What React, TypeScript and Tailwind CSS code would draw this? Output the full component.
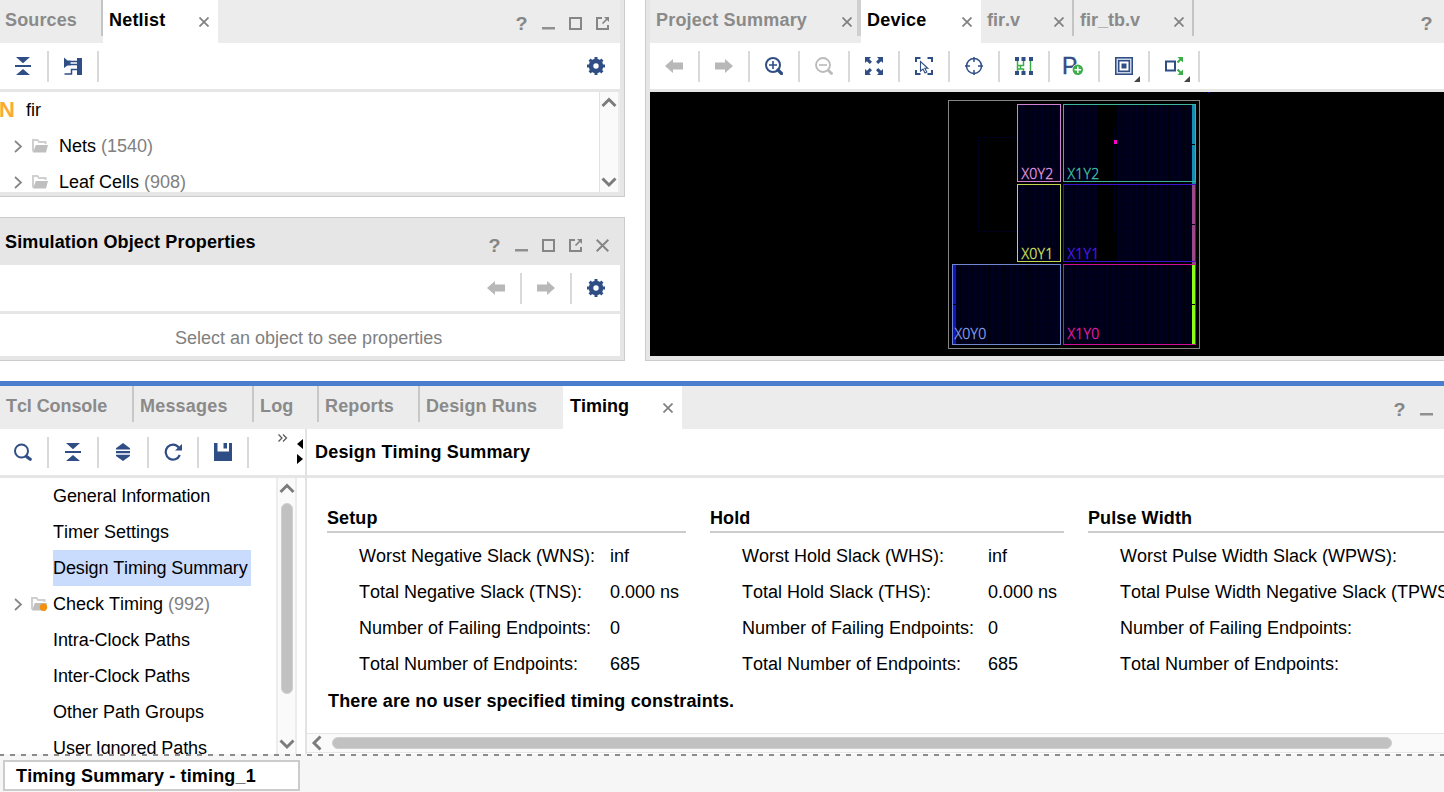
import type { ReactNode } from "react";

const NAVY = "#304e86";
const GREEN = "#3cae49";

function Svg({ w = 18, h = 18, children, className = "" }: { w?: number; h?: number; children: ReactNode; className?: string }) {
  return (
    <svg width={w} height={h} viewBox={`0 0 ${w} ${h}`} className={`block shrink-0 ${className}`} fill="none">
      {children}
    </svg>
  );
}

const CollapseAll = () => (
  <Svg>
    <path d="M2 0h14l-7 6.2zM1 8h16v2H1zM9 12l7 6H2z" fill={NAVY} />
  </Svg>
);

const ExpandAll = () => (
  <Svg>
    <path d="M9 0l7 5.2v1.3H2V5.2zM2 8h14v2.2H2zM2 11.8h14V13l-7 5-7-5z" fill={NAVY} />
  </Svg>
);

const Schematic = () => (
  <Svg>
    <path d="M13 1h5v17h-5z" fill={NAVY} />
    <path d="M0 0.5l3.500 3h3v5h-3L0 11z" fill={NAVY} />
    <path d="M6 4.5h7M6 7.5h7M0.5 17H7.500V12.5h5.500" stroke={NAVY} strokeWidth="1.5" />
  </Svg>
);

const Gear = () => (
  <Svg>
    <circle cx="9" cy="9" r="5" stroke={NAVY} strokeWidth="4.6" />
    <path
      d="M9 0v4M9 14v4M0 9h4M14 9h4M2.6 2.6l2.5 2.5M12.9 12.9l2.5 2.5M2.6 15.4l2.5-2.5M12.9 5.1l2.5-2.5"
      stroke={NAVY}
      strokeWidth="3"
    />
  </Svg>
);

const ArrowLeft = () => (
  <Svg>
    <path d="M0 9l8-7v3.5h10v7H8V16z" fill="#b8b8b8" />
  </Svg>
);

const ArrowRight = () => (
  <Svg>
    <path d="M18 9l-8-7v3.5H0v7h10V16z" fill="#b8b8b8" />
  </Svg>
);

const Search = () => (
  <Svg>
    <circle cx="7.5" cy="8" r="6.5" stroke={NAVY} strokeWidth="2" />
    <path d="M12.500 13.500l3.700 2.800" stroke={NAVY} strokeWidth="3.2" strokeLinecap="round" />
  </Svg>
);

const ZoomIn = () => (
  <Svg>
    <circle cx="8" cy="8" r="7" stroke={NAVY} strokeWidth="2" />
    <path d="M4 8h8M8 4v8" stroke={NAVY} strokeWidth="1.6" />
    <path d="M13 13l3.5 3.5" stroke={NAVY} strokeWidth="3.2" strokeLinecap="round" />
  </Svg>
);

const ZoomOut = () => (
  <Svg>
    <circle cx="8" cy="8" r="7" stroke="#bababa" strokeWidth="1.8" />
    <path d="M4 8h8" stroke="#bababa" strokeWidth="1.6" />
    <path d="M13.5 13.5l3 3" stroke="#bababa" strokeWidth="2.8" strokeLinecap="round" />
  </Svg>
);

const ZoomFit = () => (
  <Svg>
    <path d="M0 0h6L4.2 1.9 7 4.8 4.8 7 1.9 4.2 0 6zM18 0h-6l1.8 1.9L11 4.8 13.2 7l2.9-2.8L18 6zM0 18h6l-1.8-1.9L7 13.2 4.8 11l-2.9 2.8L0 12zM18 18h-6l1.8-1.9-2.8-2.9 2.2-2.2 2.9 2.8L18 12z" fill={NAVY} />
  </Svg>
);

const SelectArea = () => (
  <Svg>
    <path d="M1 5V1h4.5M12.5 1H17v4M17 13v4h-4.5M5.500 17H1v-4" stroke={NAVY} strokeWidth="2" />
    <path d="M5.500 4.500v9.500l2.500-2 2 4 1.800-1-2-3.700h3z" stroke={NAVY} strokeWidth="1.100" />
  </Svg>
);

const Crosshair = () => (
  <Svg>
    <circle cx="9" cy="9" r="7.5" stroke={NAVY} strokeWidth="1.5" />
    <path d="M9 0v5M9 13v5M0 9h5M13 9h5" stroke={NAVY} strokeWidth="1.5" />
  </Svg>
);

const Routing = () => (
  <Svg>
    <path d="M2.500 3v12M8.500 3v5.500h-6M2.500 12h6v3M5.500 8.500V12M15.500 3v12" stroke={GREEN} strokeWidth="1.500" />
    <path d="M0 0h4v4H0zM6.500 0h4v4h-4zM14 0h4v4h-4zM0 14h4v4H0zM6.500 14h4v4h-4zM14 14h4v4h-4z" fill={NAVY} />
  </Svg>
);

const AddPin = () => (
  <div className="relative h-[18px] w-5">
    <span className="absolute -left-[2px] -top-[1px] text-[23px] leading-[20px] text-[#304e86] [-webkit-text-stroke:0.4px_#304e86]">P</span>
    <Svg w={20} className="absolute left-0 top-0">
      <circle cx="13.800" cy="12.800" r="5.900" fill="#fff" />
      <circle cx="13.800" cy="12.800" r="5.200" fill={GREEN} />
      <path d="M10.500 12.800h6.600M13.800 9.500v6.600" stroke="#fff" strokeWidth="1.600" />
    </Svg>
  </div>
);

const Highlight = () => (
  <Svg>
    <rect x="0.75" y="0.75" width="16.500" height="16.500" fill="#c9d3e6" stroke={NAVY} strokeWidth="1.500" />
    <rect x="3.750" y="3.750" width="10.500" height="10.500" fill="#fff" stroke={NAVY} strokeWidth="1.500" />
    <path d="M6.500 6.500h5v5h-5z" fill={NAVY} />
  </Svg>
);

const ShowConnections = () => (
  <Svg>
    <rect x="1" y="4.500" width="9" height="9" stroke={NAVY} strokeWidth="2" />
    <path d="M12.500 5.500L16 2M12.500 12.500L16 16" stroke={GREEN} strokeWidth="2" />
    <path d="M12.500 0H18v5.500zM12.500 18H18v-5.500z" fill={GREEN} />
  </Svg>
);

const Refresh = () => (
  <Svg>
    <path d="M14.800 4.500A7.300 7.500 0 1 0 15.800 12" stroke={NAVY} strokeWidth="2.200" />
    <path d="M18 1v6.500h-7z" fill={NAVY} />
  </Svg>
);

const Save = () => (
  <Svg>
    <path d="M0 0h3.500v8.500h11.500V0h3v18H0z" fill={NAVY} />
    <path d="M9.500 0h3.500v5.500H9.500z" fill={NAVY} />
  </Svg>
);

const Folder = ({ dot = false }: { dot?: boolean }) => (
  <Svg w={17} h={15}>
    <path d="M1 12.500V1h4.500l1.500 2h6.500v2" stroke="#cfcfcf" strokeWidth="2" />
    <path d="M3.800 6H16L14 13.500H1z" fill="#bfbfbf" />
    {dot && <circle cx="12.500" cy="10.300" r="3.700" fill="#f29111" />}
  </Svg>
);

const Chevron = () => (
  <Svg w={9} h={13}>
    <path d="M1 1l6 5.500L1 12" stroke="#858585" strokeWidth="1.700" />
  </Svg>
);

const CloseX = ({ className = "" }: { className?: string }) => (
  <Svg w={10} h={10} className={className}>
    <path d="M0.500 0.500l9 9M9.500 0.500l-9 9" stroke="#808080" strokeWidth="1.700" />
  </Svg>
);

const Help = () => (
  <span className="flex h-[13px] w-[13px] scale-x-110 items-center justify-center text-[18px] font-bold leading-none text-[#868686]">?</span>
);
const Minimize = () => (
  <Svg w={13} h={13}>
    <path d="M0 10h13v2.500H0z" fill="#909090" />
  </Svg>
);
const Maximize = () => (
  <Svg w={13} h={13}>
    <rect x="1" y="1" width="11" height="11" stroke="#868686" strokeWidth="2" />
  </Svg>
);
const Float = () => (
  <Svg w={13} h={13}>
    <path d="M6 1H1v11h11V8" stroke="#868686" strokeWidth="2" />
    <path d="M8 0h5v5z" fill="#868686" />
    <path d="M6.500 6.500L11 2" stroke="#868686" strokeWidth="1.700" />
  </Svg>
);
const CloseWindow = () => (
  <Svg w={13} h={13}>
    <path d="M0.700 0.700l11.600 11.600M12.300 0.700L0.700 12.300" stroke="#868686" strokeWidth="2" />
  </Svg>
);

const Tool = ({ children, menu = false }: { children: ReactNode; menu?: boolean }) => (
  <div className="relative flex h-[46px] w-[50px] shrink-0 items-center">
    <div className="flex w-12 justify-center">{children}</div>
    <div className="h-[31px] w-[2px] bg-[#d9d9d9]" />
    {menu && (
      <svg width="6" height="6" className="absolute left-[34px] top-[33px]">
        <path d="M6 0v6H0z" fill="#444" />
      </svg>
    )}
  </div>
);

const ScrollArrow = ({ dir }: { dir: "up" | "down" | "left" }) => (
  <svg width="16" height="16" viewBox="0 0 16 16" fill="none" className="block shrink-0">
    <path
      d={dir === "up" ? "M1.500 12L8 5.500 14.500 12" : dir === "down" ? "M1.500 4.500L8 11l6.500-6.500" : "M11.500 1.500L5 8l6.500 6.500"}
      stroke="#7b7b7b"
      strokeWidth="2.900"
    />
  </svg>
);

const tabBase = "flex h-[43px] shrink-0 font-bold leading-[40px]";

function DeviceView() {
  const label = { fontFamily: "Open Sans, sans-serif", fontWeight: 300, fontSize: 14, letterSpacing: 0.3, strokeWidth: 0.35 };
  return (
    <svg width="794" height="264" viewBox="0 0 794 264" fill="none" className="block bg-black" shapeRendering="crispEdges">
      <defs>
        <pattern id="fabric" width="6" height="6" patternUnits="userSpaceOnUse">
          <path d="M0 0h6v6H0z" fill="#000019" />
          <path d="M0 0h6v1H0z" fill="#000026" />
          <path d="M0 0h1v6H0z" fill="#000021" />
          <path d="M4 0h1v6H4z" fill="#000014" />
        </pattern>
      </defs>
      <path d="M558 0h2v1h-2z" fill="#0000c0" />
      <rect x="298.500" y="8.500" width="251" height="248" stroke="#858585" />
      <path d="M367 45.500h-38.500v94H367" stroke="#00001c" />
      <path d="M367 12h44v78h-44zM413 12h133v78H413zM367 92h44v78h-44zM413 92h133v78H413zM302 172h109v81H302zM413 172h133v81H413z" fill="url(#fabric)" />
      <path d="M378.500 12v158M400.500 12v158M423.500 12v241M494.500 12v241M518.500 12v241M534.500 12v241M338.500 172v81M354.500 172v81M378.500 172v81M310.500 172v81M313.500 172v81" stroke="#00000a" />
      <path d="M447 13h20v76h-20zM447 93h20v76h-20z" fill="#000" />
      <path d="M464.500 35v54M464.500 93v47" stroke="#00001e" />
      <path d="M542 12h4v80h-4z" fill="#158faf" />
      <path d="M542 92h4v80h-4z" fill="#9b4887" />
      <path d="M542 173h3v79h-3z" fill="#8bff16" />
      <path d="M303 173h3v79h-3z" fill="#1515bd" />
      <rect x="367.500" y="12.500" width="43" height="77" stroke="#d382d3" />
      <rect x="413.500" y="12.500" width="132" height="77" stroke="#3db39a" />
      <rect x="367.500" y="92.500" width="43" height="77" stroke="#c4d64d" />
      <rect x="413.500" y="92.500" width="132" height="77" stroke="#3c12cf" />
      <rect x="302.500" y="172.500" width="108" height="80" stroke="#6f88d0" />
      <rect x="413.500" y="172.500" width="132" height="80" stroke="#cf1095" />
      <path d="M542 52h3v1h-3zM542 132h3v1h-3zM542 212h3v1h-3zM303 212h3v1h-3z" fill="#000" />
      <path d="M464 48h3v4h-3z" fill="#ff00c8" />
      <g style={label}>
        <text x="371.500" y="87" fill="#e29ae2" stroke="#e29ae2">X0Y2</text>
        <text x="417.500" y="87" fill="#45c2a8" stroke="#45c2a8">X1Y2</text>
        <text x="371.500" y="167" fill="#d2e45c" stroke="#d2e45c">X0Y1</text>
        <text x="417.500" y="167" fill="#4f1cee" stroke="#4f1cee">X1Y1</text>
        <text x="304.500" y="247" fill="#88a2ea" stroke="#88a2ea">X0Y0</text>
        <text x="417.500" y="247" fill="#e81eaa" stroke="#e81eaa">X1Y0</text>
      </g>
    </svg>
  );
}

function NetlistPanel() {
  const rows = [
    { name: "Nets", count: "(1540)" },
    { name: "Leaf Cells", count: "(908)" },
  ];
  return (
    <section className="h-[197px] w-[625px] border-b border-r border-[#ccc] bg-[#e6e6e6] pb-1 pr-1">
      <div className="flex h-[43px] bg-[#ececec]">
        <div className={`${tabBase} w-[103px] pl-[5px] tracking-[0.13px] text-[#8a8a8a]`}>
          <span className="w-24">Sources</span>
          <div className="h-9 w-[2px] bg-[#c4c4c4]" />
        </div>
        <div className={`${tabBase} w-[115px] bg-white pl-[6px] tracking-[0.2px]`}>
          <span className="w-[90px]">Netlist</span>
          <CloseX className="mt-[17px]" />
        </div>
        <div className="ml-auto mr-[11px] mt-[17px] flex gap-[14px]">
          <Help />
          <Minimize />
          <Maximize />
          <Float />
        </div>
      </div>
      <div className="flex h-[46px] bg-white">
        <div className="-ml-px flex">
          <Tool><CollapseAll /></Tool>
          <Tool><Schematic /></Tool>
        </div>
        <div className="ml-auto flex w-12 items-center justify-center"><Gear /></div>
      </div>
      <div className="mt-[3px] flex h-[100px] overflow-hidden bg-white">
        <div className="flex-1">
          <div className="flex h-9 items-center">
            <span className="w-[26px] text-[22px] font-bold leading-none text-[#fbab34]"><span className="-ml-px">N</span></span>
            <span>fir</span>
          </div>
          {rows.map((r) => (
            <div key={r.name} className="flex h-9 items-center pl-[14px]">
              <Chevron />
              <div className="ml-[9px] mr-[10px]"><Folder /></div>
              <span>{r.name}</span>
              <span className="ml-[5px] text-[#808080]">{r.count}</span>
            </div>
          ))}
        </div>
        <div className="flex w-[21px] flex-col items-center justify-between border-l border-r-2 border-l-[#e2e2e2] border-r-[#ececec] bg-[#fafafa] pb-[2px] pt-[2px]">
          <ScrollArrow dir="up" />
          <ScrollArrow dir="down" />
        </div>
      </div>
    </section>
  );
}

function PropertiesPanel() {
  return (
    <section className="mt-5 h-[144px] w-[625px] border-y border-r border-[#ccc] bg-[#e6e6e6] pb-1 pr-1">
      <div className="flex h-[47px]">
        <h2 className="pl-[5px] font-bold leading-[48px] tracking-[0.13px]">Simulation Object Properties</h2>
        <div className="ml-auto mr-[11px] mt-[21px] flex gap-[14px]">
          <Help />
          <Minimize />
          <Maximize />
          <Float />
          <CloseWindow />
        </div>
      </div>
      <div className="flex h-[46px] justify-end bg-white">
        <Tool><ArrowLeft /></Tool>
        <Tool><ArrowRight /></Tool>
        <div className="flex w-12 items-center justify-center"><Gear /></div>
      </div>
      <div className="mt-[3px] h-[42px] bg-white pl-[175px] leading-[48px] text-[#808080]">Select an object to see properties</div>
    </section>
  );
}

function DevicePanel() {
  return (
    <section className="ml-5 flex h-[361px] flex-1 flex-col overflow-hidden border-b border-l border-[#ccc] bg-[#e6e6e6] pb-1 pl-1">
      <div className="flex h-[43px] bg-[#ececec] text-[#8a8a8a]">
        <div className={`${tabBase} w-[211px] pl-[6px]`}>
          <span className="w-[186px] tracking-[0.2px]">Project Summary</span>
          <CloseX className="mt-[17px]" />
          <div className="ml-[5px] h-9 w-1 bg-[#d0d0d0]" />
        </div>
        <div className={`${tabBase} w-[120px] bg-white pl-[6px] tracking-[0.25px] text-black`}>
          <span className="w-[95px]">Device</span>
          <CloseX className="mt-[17px]" />
        </div>
        <div className={`${tabBase} w-[93px] pl-[6px]`}>
          <span className="w-[67px]">fir.v</span>
          <CloseX className="mt-[17px]" />
          <div className="ml-2 h-9 w-[2px] bg-[#c4c4c4]" />
        </div>
        <div className={`${tabBase} pl-[6px]`}>
          <span className="w-[94px]">fir_tb.v</span>
          <CloseX className="mt-[17px]" />
          <div className="ml-2 h-9 w-[2px] bg-[#c4c4c4]" />
        </div>
        <div className="ml-auto mr-[11px] mt-[17px]"><Help /></div>
      </div>
      <div className="mb-[3px] flex h-[46px] bg-white">
        <Tool><ArrowLeft /></Tool>
        <Tool><ArrowRight /></Tool>
        <Tool><ZoomIn /></Tool>
        <Tool><ZoomOut /></Tool>
        <Tool><ZoomFit /></Tool>
        <Tool><SelectArea /></Tool>
        <Tool><Crosshair /></Tool>
        <Tool><Routing /></Tool>
        <Tool><AddPin /></Tool>
        <Tool menu><Highlight /></Tool>
        <Tool menu><ShowConnections /></Tool>
      </div>
      <DeviceView />
    </section>
  );
}

const tree = [
  { name: "General Information", cls: "tracking-[-0.1px]" },
  { name: "Timer Settings", cls: "" },
  { name: "Design Timing Summary", cls: "h-9 w-[198px] whitespace-nowrap bg-[#c9dcfe] leading-9 tracking-[-0.12px]" },
  { name: "Check Timing", count: "(992)", cls: "" },
  { name: "Intra-Clock Paths", cls: "tracking-[-0.07px]" },
  { name: "Inter-Clock Paths", cls: "tracking-[-0.07px]" },
  { name: "Other Path Groups", cls: "" },
  { name: "User Ignored Paths", cls: "tracking-[-0.06px]" },
];

function TimingGroup({ title, rows, className, labelWidth }: { title: string; rows: string[][]; className: string; labelWidth: string }) {
  return (
    <div className={`shrink-0 ${className}`}>
      <h3 className="h-[29px] border-b-2 border-[#ccc] font-bold leading-[28px] tracking-[0.1px]">{title}</h3>
      <div className="pl-8 pt-[5px]">
        {rows.map(([k, v]) => (
          <div key={k} className="flex h-9 items-center whitespace-nowrap">
            <span className={`${labelWidth} shrink-0`}>{k}</span>
            <span>{v}</span>
          </div>
        ))}
      </div>
    </div>
  );
}

function TimingPanel() {
  const tabs = [
    { name: "Tcl Console", cls: "w-[134px] pl-[6px] tracking-[-0.08px]", sep: true },
    { name: "Messages", cls: "w-[120px] pl-[6px] tracking-[0.2px]", sep: true },
    { name: "Log", cls: "w-[65px] pl-[6px] tracking-[0.13px]", sep: true },
    { name: "Reports", cls: "w-[101px] pl-[6px] tracking-[0.13px]", sep: true },
    { name: "Design Runs", cls: "w-[143px] pl-[6px] tracking-[0.1px]", sep: false },
  ];
  return (
    <section className="mt-5 flex h-[373px] shrink-0 flex-col overflow-hidden border-t-[5px] border-[#4a7dcd]">
      <div className="flex h-[43px] shrink-0 bg-[#ececec]">
        {tabs.map((t) => (
          <div key={t.name} className={`${tabBase} ${t.cls} justify-between text-[#8a8a8a]`}>
            <span>{t.name}</span>
            {t.sep && <div className="h-9 w-[2px] bg-[#c8c8c8]" />}
          </div>
        ))}
        <div className={`${tabBase} w-[119px] bg-white pl-[7px]`}>
          <span className="w-[93px]">Timing</span>
          <CloseX className="mt-[17px]" />
        </div>
        <div className="ml-auto mr-[11px] mt-[17px] flex gap-[14px]">
          <Help />
          <Minimize />
        </div>
      </div>
      <div className="flex min-h-0 flex-1">
        <aside className="flex w-[305px] shrink-0 flex-col">
          <div className="flex h-[49px] shrink-0 border-b-[3px] border-[#e6e6e6]">
            <div className="-ml-px flex">
              <Tool><Search /></Tool>
              <Tool><CollapseAll /></Tool>
              <Tool><ExpandAll /></Tool>
              <Tool><Refresh /></Tool>
              <Tool><Save /></Tool>
            </div>
            <Svg w={10} h={8} className="ml-[29px] mt-[5px]">
              <path d="M0.500 0.500L4 4 0.500 7.500M5 0.500L8.500 4 5 7.500" stroke="#555" strokeWidth="1.200" />
            </Svg>
            <Svg w={6} h={25} className="ml-auto mr-[2px] mt-[10px]">
              <path d="M6 0v10L0 5zM0 15v10l6-5z" fill="#000" />
            </Svg>
          </div>
          <div className="flex min-h-0 flex-1 overflow-hidden">
            <div className="w-[276px] shrink-0">
              {tree.map((t) => (
                <div key={t.name} className="flex h-9 items-center">
                  <div className="flex w-[53px] shrink-0 items-center pl-[14px]">
                    {t.count && (
                      <>
                        <Chevron />
                        <div className="ml-2"><Folder dot /></div>
                      </>
                    )}
                  </div>
                  <span className={t.cls}>{t.name}</span>
                  {t.count && <span className="ml-[5px] text-[#808080]">{t.count}</span>}
                </div>
              ))}
            </div>
            <div className="flex w-[21px] flex-col items-center border-l-2 border-r-2 border-[#ececec] bg-[#fafafa] pb-[2px] pt-[2px]">
              <ScrollArrow dir="up" />
              <div className="mt-[7px] h-[191px] w-3 rounded-full border border-[#cfcfcf] bg-[#c1c1c1]" />
              <div className="mt-auto"><ScrollArrow dir="down" /></div>
            </div>
          </div>
        </aside>
        <main className="flex min-w-0 flex-1 flex-col border-l-2 border-[#e2e2e2]">
          <h2 className="h-[49px] shrink-0 border-b-[3px] border-[#e6e6e6] pl-2 font-bold leading-[46px] tracking-[0.2px]">Design Timing Summary</h2>
          <div className="flex-1 overflow-hidden pl-5 pt-[26px]">
            <div className="flex gap-6">
              <TimingGroup
                title="Setup"
                className="w-[359px]"
                labelWidth="w-[251px]"
                rows={[
                  ["Worst Negative Slack (WNS):", "inf"],
                  ["Total Negative Slack (TNS):", "0.000 ns"],
                  ["Number of Failing Endpoints:", "0"],
                  ["Total Number of Endpoints:", "685"],
                ]}
              />
              <TimingGroup
                title="Hold"
                className="w-[354px]"
                labelWidth="w-[246px]"
                rows={[
                  ["Worst Hold Slack (WHS):", "inf"],
                  ["Total Hold Slack (THS):", "0.000 ns"],
                  ["Number of Failing Endpoints:", "0"],
                  ["Total Number of Endpoints:", "685"],
                ]}
              />
              <TimingGroup
                title="Pulse Width"
                className="w-[420px]"
                labelWidth="w-[380px]"
                rows={[
                  ["Worst Pulse Width Slack (WPWS):", ""],
                  ["Total Pulse Width Negative Slack (TPWS):", ""],
                  ["Number of Failing Endpoints:", ""],
                  ["Total Number of Endpoints:", ""],
                ]}
              />
            </div>
            <p className="pl-px font-bold leading-[38px] tracking-[0.13px]">There are no user specified timing constraints.</p>
          </div>
          <div className="mb-px flex h-5 shrink-0 items-center border-y border-[#e6e6e6] bg-[#fafafa] pl-[2px]">
            <ScrollArrow dir="left" />
            <div className="ml-[7px] h-3 w-[1060px] rounded-full border border-[#cfcfcf] bg-[#c1c1c1]" />
          </div>
        </main>
      </div>
    </section>
  );
}

export default function App() {
  return (
    <div className="flex h-[792px] w-[1444px] flex-col overflow-hidden bg-white text-[18px] text-black [font-family:'Liberation_Sans',Arial,sans-serif] [font-kerning:none]">
      <div className="flex h-[361px] shrink-0">
        <div className="w-[625px] shrink-0">
          <NetlistPanel />
          <PropertiesPanel />
        </div>
        <DevicePanel />
      </div>
      <TimingPanel />
      <footer className="h-[38px] shrink-0 bg-[#f6f6f6]">
        <svg width="1444" height="2" className="block">
          <path d="M-1 1h1445" stroke="#8c8c8c" strokeWidth="2" strokeDasharray="5 6" />
        </svg>
        <div className="ml-[3px] mt-1 h-[31px] w-[297px] border-2 border-[#ccc] bg-white pl-[11px] font-bold leading-[28px] tracking-[0.15px]">
          Timing Summary - timing_1
        </div>
      </footer>
    </div>
  );
}
